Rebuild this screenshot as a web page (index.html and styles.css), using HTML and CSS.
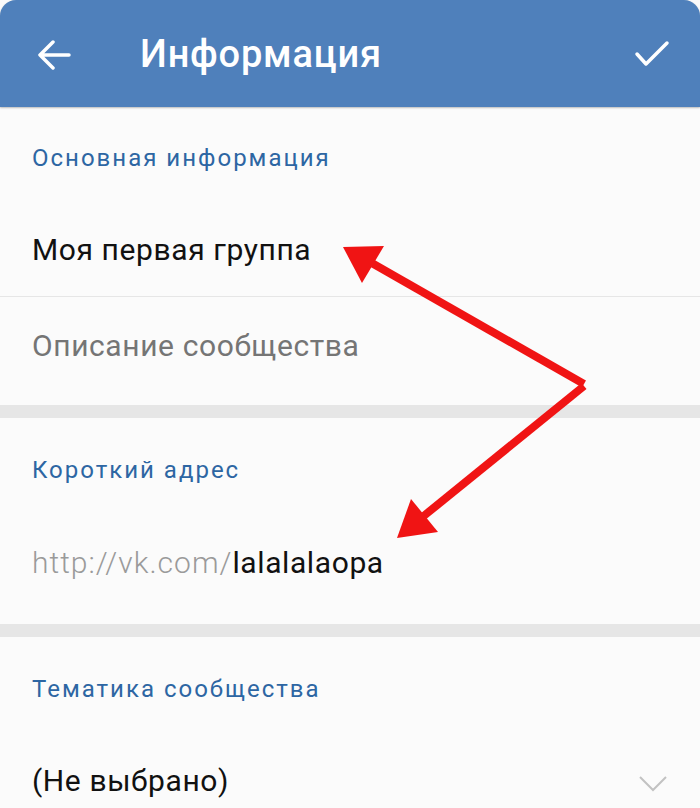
FILE: index.html
```html
<!DOCTYPE html>
<html lang="ru">
<head>
  <meta charset="UTF-8" />
  <meta name="viewport" content="width=device-width, initial-scale=1.0" />
  <title>Информация</title>
  <link rel="stylesheet" href="styles.css">
</head>
<body>
  <header class="toolbar">
    <svg class="icon-back" width="34" height="30" viewBox="0 0 34 30">
      <path d="M3 15 H32 M16 2 L3 15 L16 28" fill="none" stroke="#fff" stroke-width="3.5" stroke-linecap="round" stroke-linejoin="round"/>
    </svg>
    <h1 class="toolbar-title">Информация</h1>
    <svg class="icon-done" width="36" height="28" viewBox="0 0 36 28">
      <path d="M3 14 L12 24 L33 3" fill="none" stroke="#fff" stroke-width="3.5" stroke-linecap="round" stroke-linejoin="round"/>
    </svg>
  </header>

  <main>
    <section class="group">
      <div class="group-title first">Основная информация</div>
      <div class="field field-first">Моя первая группа</div>
      <div class="field field-last placeholder">Описание сообщества</div>
    </section>

    <section class="group">
      <div class="group-title">Короткий адрес</div>
      <div class="field field-single"><span class="prefix">http://vk.com/</span>lalalalaopa</div>
    </section>

    <section class="group">
      <div class="group-title">Тематика сообщества</div>
      <div class="field field-select">
        <span>(Не выбрано)</span>
        <svg class="icon-chevron" width="28" height="16" viewBox="0 0 28 16">
          <path d="M1 1 L14 14 L27 1" fill="none" stroke="#c2c2c2" stroke-width="2"/>
        </svg>
      </div>
    </section>
  </main>

  <svg class="annotation" width="700" height="808" viewBox="0 0 700 808">
    <g stroke="#f01414" stroke-width="8" fill="none" stroke-linecap="butt">
      <line x1="584" y1="384" x2="370" y2="262"/>
      <line x1="584" y1="386" x2="420" y2="519"/>
    </g>
    <g fill="#f01414">
      <polygon points="343,247 384,246 362,283"/>
      <polygon points="397,538 411,499 438,532"/>
    </g>
  </svg>
</body>
</html>
```

FILE: styles.css
```css
body {
  margin: 0;
  font-family: Roboto, "Noto Sans", sans-serif;
  background: #fafafa;
  position: relative;
}
.toolbar {
  display: flex;
  align-items: center;
  height: 107px;
  padding: 0 30px 0 37px;
  background-color: #4f80bb;
  border-radius: 16px 16px 0 0;
  box-shadow: 0 1px 2px rgba(0, 0, 0, 0.25);
  position: relative;
  z-index: 1;
}
.icon-back {
  display: block;
  margin-top: 2px;
}
.toolbar-title {
  margin: 0 0 0 69px;
  color: #fff;
  font-size: 38px;
  font-weight: 500;
  letter-spacing: 0.8px;
}
.icon-done {
  display: block;
  margin-left: auto;
}
.group {
  background: #fbfbfb;
  border-bottom: 13px solid #e6e6e6;
  box-shadow: 0 1px 0 #d2d2d2;
}
.group:last-child {
  border-bottom: none;
  box-shadow: none;
}
.group-title {
  padding: 40px 32px 0;
  line-height: 24px;
  font-size: 24px;
  color: #2d66a3;
  letter-spacing: 2px;
}
.group-title.first {
  padding-top: 39px;
}
.field {
  padding: 0 32px;
  line-height: 30px;
  font-size: 30px;
  color: #111;
  letter-spacing: 0.6px;
}
.field-first {
  padding-top: 65px;
  padding-bottom: 31px;
  border-bottom: 1px solid #e6e6e6;
}
.field-last {
  padding-top: 34px;
  padding-bottom: 44px;
}
.placeholder {
  color: #757575;
}
.field-single {
  padding-top: 66px;
  padding-bottom: 46px;
}
.prefix {
  color: #9a9a9a;
  font-weight: 300;
  letter-spacing: 1px;
}
.field-select {
  display: flex;
  align-items: center;
  justify-content: space-between;
  padding-top: 65px;
  padding-right: 33px;
  padding-bottom: 18px;
}
.icon-chevron {
  display: block;
  margin-top: 6px;
}
.annotation {
  position: absolute;
  left: 0;
  top: 0;
  z-index: 2;
  pointer-events: none;
}
```
